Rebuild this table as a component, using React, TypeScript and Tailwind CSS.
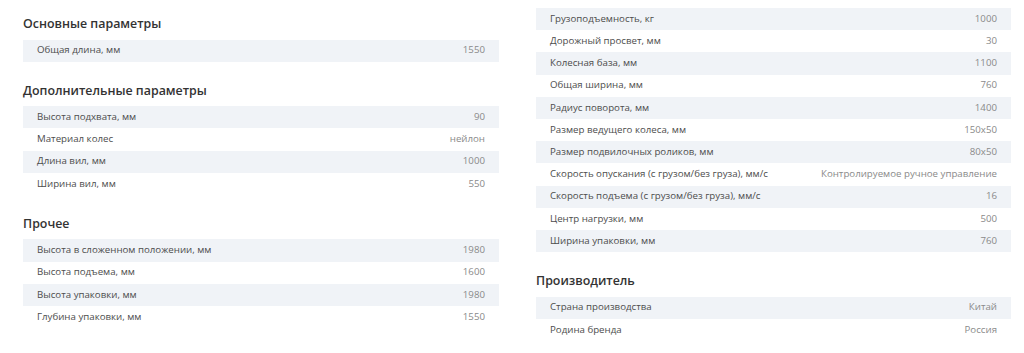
import React from "react";

type Row = [string, string];
type Section = { title?: string; rows: Row[] };

const left: Section[] = [
  { title: "Основные параметры", rows: [["Общая длина, мм", "1550"]] },
  {
    title: "Дополнительные параметры",
    rows: [
      ["Высота подхвата, мм", "90"],
      ["Материал колес", "нейлон"],
      ["Длина вил, мм", "1000"],
      ["Ширина вил, мм", "550"],
    ],
  },
  {
    title: "Прочее",
    rows: [
      ["Высота в сложенном положении, мм", "1980"],
      ["Высота подъема, мм", "1600"],
      ["Высота упаковки, мм", "1980"],
      ["Глубина упаковки, мм", "1550"],
    ],
  },
];

const right: Section[] = [
  {
    rows: [
      ["Грузоподъемность, кг", "1000"],
      ["Дорожный просвет, мм", "30"],
      ["Колесная база, мм", "1100"],
      ["Общая ширина, мм", "760"],
      ["Радиус поворота, мм", "1400"],
      ["Размер ведущего колеса, мм", "150x50"],
      ["Размер подвилочных роликов, мм", "80x50"],
      ["Скорость опускания (с грузом/без груза), мм/с", "Контролируемое ручное управление"],
      ["Скорость подъема (с грузом/без груза), мм/с", "16"],
      ["Центр нагрузки, мм", "500"],
      ["Ширина упаковки, мм", "760"],
    ],
  },
  {
    title: "Производитель",
    rows: [
      ["Страна производства", "Китай"],
      ["Родина бренда", "Россия"],
    ],
  },
];

function SectionView({ s }: { s: Section }) {
  return (
    <div className="mb-[19px]">
      {s.title && (
        <h3 className="text-[12.4px] leading-[20px] font-semibold text-[#333333] mb-[5.5px] whitespace-nowrap">
          {s.title}
        </h3>
      )}
      <div>
        {s.rows.map(([k, v], i) => (
          <div
            key={k}
            className={`flex items-center justify-between h-[22.2px] px-[14px] text-[9.7px] whitespace-nowrap ${
              i % 2 === 0 ? "bg-[#f0f3f7]" : "bg-white"
            }`}
          >
            <span className="text-[#4d4d4d]">{k}</span>
            <span className="text-[#8a8a8a]">{v}</span>
          </div>
        ))}
      </div>
    </div>
  );
}

export default function App() {
  return (
    <div
      className="w-[1024px] h-[353px] bg-white overflow-hidden flex pl-[23px]"
      style={{ fontFamily: '"Open Sans", "Noto Sans", sans-serif' }}
    >
      <div className="w-[476px] pt-[14px]">
        {left.map((s, i) => (
          <SectionView key={i} s={s} />
        ))}
      </div>
      <div className="w-[475px] ml-[37px] pt-[8px]">
        {right.map((s, i) => (
          <SectionView key={i} s={s} />
        ))}
      </div>
    </div>
  );
}
